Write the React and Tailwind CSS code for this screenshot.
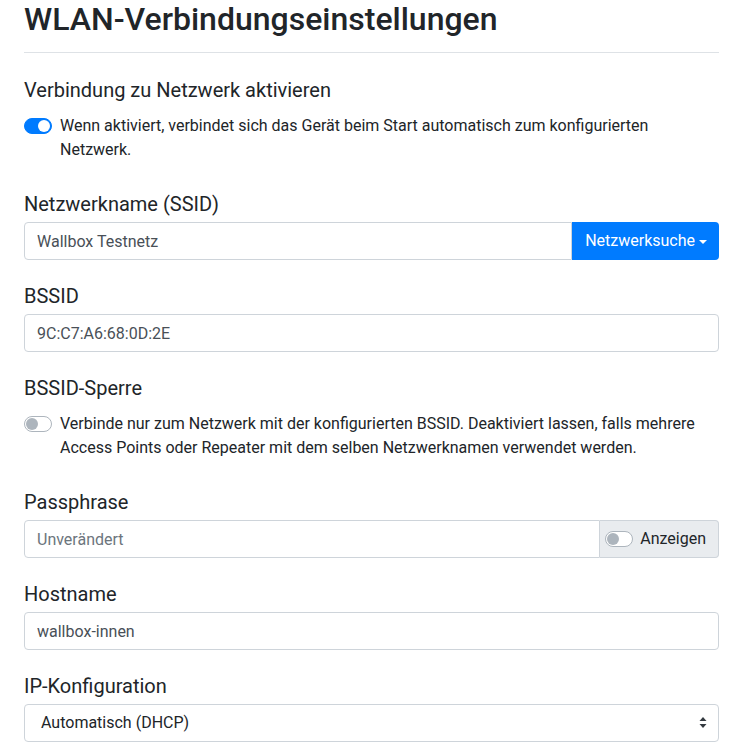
import { useState } from 'react';

const Switch = ({ checked }) => (
  <span
    className={`absolute left-0 top-1 h-4 w-7 rounded-full border ${
      checked ? 'border-[#007bff] bg-[#007bff]' : 'border-[#adb5bd] bg-white'
    }`}
  >
    <span
      className={`absolute top-[1px] h-3 w-3 rounded-full ${
        checked ? 'left-[13px] bg-white' : 'left-[1px] bg-[#adb5bd]'
      }`}
    />
  </span>
);

const Label = ({ children, className = '' }) => (
  <div className={`text-[20px] leading-6 font-normal ${className}`}>{children}</div>
);

const inputCls =
  'h-[38px] w-full border border-[#ced4da] bg-white px-3 text-base text-[#495057] outline-none';

const App = () => {
  const [ssid] = useState('Wallbox Testnetz');

  return (
    <div className="min-h-[754px] bg-white px-6 text-[#212529] font-['Roboto',sans-serif]">
      <h3 className="text-[32px] leading-[38px] font-medium">WLAN-Verbindungseinstellungen</h3>
      <hr className="mt-[14px] border-t border-[#dee2e6]" />

      <Label className="mt-[25px]">Verbindung zu Netzwerk aktivieren</Label>
      <div className="relative mt-3 pl-9 text-base leading-6">
        <Switch checked />
        Wenn aktiviert, verbindet sich das Gerät beim Start automatisch zum konfigurierten Netzwerk.
      </div>

      <Label className="mt-[30px]">Netzwerkname (SSID)</Label>
      <div className="mt-1.5 flex">
        <input className={`${inputCls} rounded-l text-[#212529]`} defaultValue={ssid} />
        <button className="flex h-[38px] shrink-0 items-center rounded-r bg-[#007bff] pl-[13px] pr-3 text-base text-white">
          Netzwerksuche
          <span className="ml-1 mt-0.5 border-x-4 border-t-4 border-x-transparent border-t-white" />
        </button>
      </div>

      <Label className="mt-6">BSSID</Label>
      <input className={`${inputCls} mt-1.5 rounded text-[#212529]`} defaultValue="9C:C7:A6:68:0D:2E" />

      <Label className="mt-6">BSSID-Sperre</Label>
      <div className="relative mt-3 pl-9 text-base leading-6">
        <Switch />
        Verbinde nur zum Netzwerk mit der konfigurierten BSSID. Deaktiviert lassen, falls mehrere Access
        Points oder Repeater mit dem selben Netzwerknamen verwendet werden.
      </div>

      <Label className="mt-[30px]">Passphrase</Label>
      <div className="mt-1.5 flex">
        <input className={`${inputCls} rounded-l placeholder:text-[#6c757d]`} placeholder="Unverändert" />
        <div className="flex h-[38px] shrink-0 items-center rounded-r border border-l-0 border-[#ced4da] bg-[#e9ecef] pl-[5px] pr-3">
          <span className="relative block h-6 w-7">
            <Switch />
          </span>
          <span className="ml-[7px] text-base">Anzeigen</span>
        </div>
      </div>

      <Label className="mt-6">Hostname</Label>
      <input className={`${inputCls} mt-1.5 rounded text-[#212529]`} defaultValue="wallbox-innen" />

      <Label className="mt-6">IP-Konfiguration</Label>
      <div className="relative mt-1.5">
        <div className="flex h-[38px] w-full items-center rounded border border-[#ced4da] bg-white pl-4 text-base text-[#212529]">
          Automatisch (DHCP)
        </div>
        <svg className="absolute right-[12px] top-[13px]" width="8" height="11" viewBox="0 0 8 11">
          <path d="M4 0 L7.5 4 H0.5 Z M4 11 L7.5 7 H0.5 Z" fill="#343a40" />
        </svg>
      </div>
    </div>
  );
};

export default App;
